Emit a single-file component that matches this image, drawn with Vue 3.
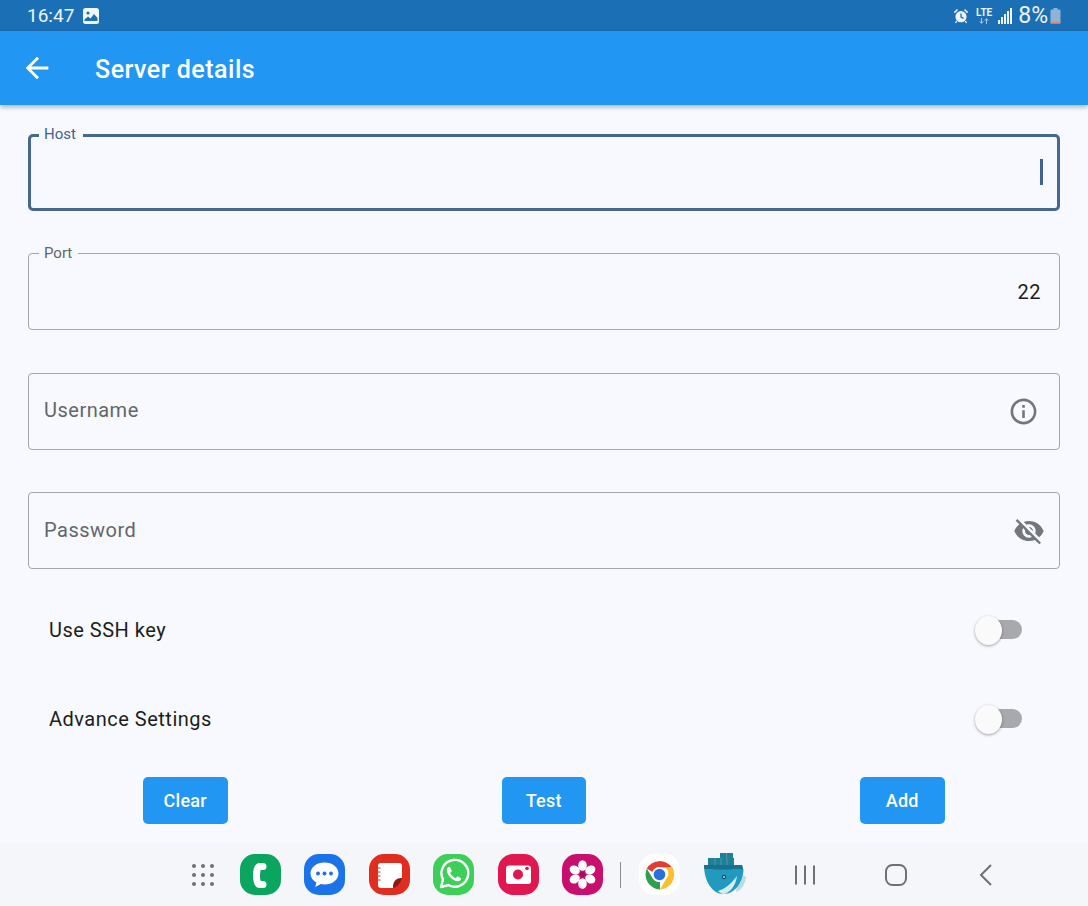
<template>
  <div class="screen">
    <!-- Status bar -->
    <div class="status-bar">
      <div class="status-left">
        <span class="clock">16:47</span>
        <svg class="gallery" viewBox="0 0 16 16" width="16" height="16">
          <rect x="0" y="0" width="16" height="16" rx="2.5" fill="#f1f6fb" />
          <circle cx="5" cy="5" r="1.6" fill="#1a6fb5" />
          <path d="M1.5 13 L1.5 11.5 L5 8.5 L7.5 10.5 L11 6 L14.5 10 L14.5 13 Z" fill="#1a6fb5" />
        </svg>
      </div>
      <div class="status-right">
        <svg class="alarm" viewBox="0 0 16 16" width="16" height="16">
          <circle cx="8" cy="8.7" r="5.6" fill="#eef4fa" />
          <path d="M8 5.5 V9 L10.6 10.4" stroke="#1a6fb5" stroke-width="1.3" fill="none" />
          <path d="M0.8 4 L4 1 L5 2 L1.9 5.2 Z M15.2 4 L12 1 L11 2 L14.1 5.2 Z" fill="#eef4fa" />
          <path d="M3.6 13 L2.6 15 M12.4 13 L13.4 15" stroke="#eef4fa" stroke-width="1.4" />
        </svg>
        <div class="lte">
          <span>LTE</span>
          <svg viewBox="0 0 12 6" width="12" height="6">
            <path d="M3.5 0 V5 M1.8 3.4 L3.5 5.4 L5.2 3.4 M8.5 6 V1 M6.8 2.6 L8.5 0.6 L10.2 2.6" stroke="#a9c8e4" stroke-width="1" fill="none" />
          </svg>
        </div>
        <div class="signal">
          <i v-for="h in signalBars" :key="h" :style="{ height: h + 'px' }"></i>
        </div>
        <span class="battery-text">8%</span>
        <svg class="battery" viewBox="0 0 11 16" width="11" height="16">
          <rect x="3.5" y="0" width="4" height="2" fill="#8fb3d3" />
          <rect x="0.5" y="1.5" width="10" height="14" rx="1.2" fill="#8fb3d3" />
          <rect x="0.5" y="13.8" width="10" height="1.7" fill="#d98a7c" />
        </svg>
      </div>
    </div>

    <!-- App bar -->
    <header class="app-bar">
      <svg class="back" viewBox="0 0 24 24" width="34" height="34">
        <path d="M20 11H7.83l5.59-5.59L12 4l-8 8 8 8 1.41-1.41L7.83 13H20v-2z" fill="#fff" />
      </svg>
      <h1>Server details</h1>
    </header>

    <main class="form">
      <div class="field focused">
        <label class="float-label">Host</label>
        <span class="caret"></span>
      </div>
      <div class="field">
        <label class="float-label">Port</label>
        <span class="value">22</span>
      </div>
      <div class="field">
        <span class="placeholder">Username</span>
        <svg class="info" viewBox="0 0 24 24" width="31" height="31">
          <path fill="#73767b" d="M11 7h2v2h-2zm0 4h2v6h-2zm1-9C6.48 2 2 6.48 2 12s4.48 10 10 10 10-4.48 10-10S17.52 2 12 2zm0 18c-4.41 0-8-3.59-8-8s3.59-8 8-8 8 3.59 8 8-3.59 8-8 8z" />
        </svg>
      </div>
      <div class="field">
        <span class="placeholder">Password</span>
        <svg class="eye" viewBox="0 0 24 24" width="32" height="32">
          <path fill="#73767b" d="M12 7c2.76 0 5 2.24 5 5 0 .65-.13 1.26-.36 1.83l2.92 2.92c1.51-1.26 2.7-2.89 3.43-4.75-1.73-4.39-6-7.5-11-7.5-1.4 0-2.74.25-3.98.7l2.16 2.16C10.74 7.13 11.35 7 12 7zM2 4.27l2.28 2.28.46.46C3.08 8.3 1.78 10.02 1 12c1.73 4.39 6 7.5 11 7.5 1.55 0 3.03-.3 4.38-.84l.42.42L19.73 22 21 20.73 3.27 3 2 4.27zM7.53 9.8l1.55 1.55c-.05.21-.08.43-.08.65 0 1.66 1.34 3 3 3 .22 0 .44-.03.65-.08l1.55 1.55c-.67.33-1.41.53-2.2.53-2.76 0-5-2.24-5-5 0-.79.2-1.53.53-2.2zm4.31-.78l3.15 3.15.02-.16c0-1.66-1.34-3-3-3l-.17.01z" />
        </svg>
      </div>

      <div class="switch-row first">
        <span>Use SSH key</span>
        <div class="switch"><span class="thumb"></span></div>
      </div>
      <div class="switch-row second">
        <span>Advance Settings</span>
        <div class="switch"><span class="thumb"></span></div>
      </div>

      <div class="actions">
        <button v-for="a in actions" :key="a">{{ a }}</button>
      </div>
    </main>

    <!-- Launcher dock -->
    <footer class="dock">
      <div class="apps-grid">
        <i v-for="n in 9" :key="n"></i>
      </div>

      <svg class="app first-app" viewBox="0 0 41 41">
        <rect width="41" height="41" rx="15" fill="#0aa55f" />
        <path d="M23 12.500h-3c-2.500 0-3.500 4-3.500 9s1 9 3.500 9h3" fill="none" stroke="#fff" stroke-width="7" stroke-linecap="round" stroke-linejoin="round" />
      </svg>

      <svg class="app" viewBox="0 0 41 41">
        <rect width="41" height="41" rx="15" fill="#1a73e8" />
        <path d="M20.500 8.500c-8 0-14 4.800-14 11 0 3.800 2.300 7 5.800 9l-1 4.500 5.500-3c1.200.3 2.400.5 3.700.5 8 0 14-4.800 14-11s-6-11-14-11z" fill="#fff" />
        <circle cx="14" cy="19.500" r="2" fill="#1a73e8" />
        <circle cx="20.500" cy="19.500" r="2" fill="#1a73e8" />
        <circle cx="27" cy="19.500" r="2" fill="#1a73e8" />
      </svg>

      <svg class="app" viewBox="0 0 41 41">
        <rect width="41" height="41" rx="15" fill="#df2d1f" />
        <path d="M12 9h18a3 3 0 0 1 3 3v12l-9 10H12a3 3 0 0 1-3-3V12a3 3 0 0 1 3-3z" fill="#fff" />
        <path d="M33 24c-5-.8-9.500 3-9 10 4-1 8-5 9-10z" fill="#8c1a12" />
        <path d="M8.500 14h3M8.500 18h3M8.500 22h3M8.500 26h3" stroke="#df2d1f" stroke-width="1" />
      </svg>

      <svg class="app" viewBox="0 0 41 41">
        <rect width="41" height="41" rx="15" fill="#3ecf58" />
        <path d="M8 33l2-7.500A13.400 13.400 0 1 1 15.400 31z" fill="none" stroke="#fff" stroke-width="2.400" stroke-linejoin="round" />
        <path d="M16.200 12.800c-.9 0-2.400 1.200-2.400 3.500 0 5 6.400 11 11 11 2.300 0 3.400-1.600 3.400-2.700 0-.5-3.200-2.200-3.700-2.200-.6 0-1.200 1.600-1.800 1.600-1.600 0-5.300-3.500-5.300-5.200 0-.6 1.400-1.200 1.400-1.800 0-.5-1.500-4.200-2.600-4.200z" fill="#fff" />
      </svg>

      <svg class="app" viewBox="0 0 41 41">
        <rect width="41" height="41" rx="15" fill="#e0184f" />
        <rect x="8" y="11.500" width="25" height="18.500" rx="3" fill="#fff" />
        <circle cx="20" cy="20.500" r="5" fill="#e0184f" />
        <circle cx="29" cy="14.500" r="1.800" fill="#e0184f" />
      </svg>

      <svg class="app" viewBox="0 0 41 41">
        <rect width="41" height="41" rx="15" fill="#c80f6d" />
        <g fill="#fff">
          <ellipse v-for="r in petals" :key="r" cx="20.500" cy="11.500" rx="4.300" ry="5.300" :transform="`rotate(${r} 20.500 20.500)`" />
        </g>
        <circle cx="20.500" cy="20.500" r="2.400" fill="#a10d59" />
      </svg>

      <span class="dock-divider"></span>

      <svg class="chrome" viewBox="0 0 41 41">
        <rect width="41" height="41" rx="15" fill="#fff" />
        <path d="M7.800 14A15 15 0 0 1 33 13H20.500a7.500 7.500 0 0 0-7 4.500z" fill="#e23d31" transform="translate(0 .5)" />
        <path d="M33.500 13.500A15 15 0 0 1 21 35.500l6-10.500a7.500 7.500 0 0 0-.500-11.500z" fill="#fbc02d" />
        <path d="M21 35.500A15 15 0 0 1 7.800 14.500l6.200 10.500a7.500 7.500 0 0 0 7 3z" fill="#2f9e4f" />
        <circle cx="20.500" cy="20.500" r="7.500" fill="#fff" />
        <circle cx="20.500" cy="20.500" r="5.800" fill="#2a6fe0" />
      </svg>

      <svg class="docker" viewBox="0 0 42 43">
        <path d="M16 0h13v5h-13z" fill="#1f7f96" />
        <path d="M4 5h26v8H4z" fill="#1f7f96" />
        <path d="M11 5v8M17 5v8M23 5v8M22.500 0v5" stroke="#5aa9ba" stroke-width=".7" />
        <path d="M32 39c6-2 9-8 10-15l-7-4z" fill="#b8dde0" />
        <path d="M0 12h38l1.500 5c-1 13-9 24-20 24C8 41 0 28 0 12z" fill="#229ac0" />
        <path d="M0 12h38l1 4.500c-6-1.800-12 .5-19 0-7 .6-13-1-19.700-.5z" fill="#17718f" />
        <path d="M14 38c7-2 13-7 19-15-1 9-7 17-13 18-2 0-4-1-6-3z" fill="#d5edf0" />
        <circle cx="20" cy="24" r="2.200" fill="#0e4f68" />
        <circle cx="20" cy="24" r="1" fill="#bfe3ec" />
      </svg>

      <div class="nav">
        <svg viewBox="0 0 22 20" width="22" height="20">
          <path d="M2 .5v19M11 .5v19M20 .5v19" stroke="#6d7075" stroke-width="2" fill="none" />
        </svg>
        <svg viewBox="0 0 22 22" width="22" height="22">
          <rect x="1" y="1" width="20" height="20" rx="6.500" stroke="#6d7075" stroke-width="2" fill="none" />
        </svg>
        <svg viewBox="0 0 13 22" width="13" height="22">
          <path d="M12 1L2 11l10 10" stroke="#6d7075" stroke-width="2" fill="none" />
        </svg>
      </div>
    </footer>
  </div>
</template>

<script setup>
const signalBars = [4, 7, 10, 13, 16]
const petals = [0, 60, 120, 180, 240, 300]
const actions = ['Clear', 'Test', 'Add']
</script>

<style>
html,
body {
  margin: 0;
  background: #f7f9fe;
}
</style>

<style scoped>
.screen {
  width: 1088px;
  height: 906px;
  overflow: hidden;
  display: flex;
  flex-direction: column;
  background: #f7f9fe;
  font-family: 'Roboto', sans-serif;
  color: #1c1d20;
}

/* Status bar */
.status-bar {
  height: 31px;
  flex: none;
  display: flex;
  align-items: center;
  justify-content: space-between;
  padding: 0 27px;
  background: #1b6fb5;
  color: #edf4fa;
}
.status-left {
  display: flex;
  align-items: center;
  gap: 9px;
}
.clock {
  font-size: 19px;
}
.status-right {
  display: flex;
  align-items: center;
}
.alarm {
  margin-right: 7px;
}
.lte {
  display: flex;
  flex-direction: column;
  align-items: center;
  margin-right: 6px;
}
.lte span {
  font-size: 10px;
  font-weight: 700;
  line-height: 10px;
}
.signal {
  display: flex;
  align-items: flex-end;
  gap: 1px;
  margin-right: 6px;
  height: 16px;
}
.signal i {
  display: block;
  width: 2px;
  background: #edf4fa;
}
.battery-text {
  font-size: 23px;
  line-height: 26px;
}
.battery {
  margin-left: 2px;
}

/* App bar */
.app-bar {
  height: 74px;
  flex: none;
  display: flex;
  align-items: center;
  padding-left: 20px;
  background: #2196f3;
  box-shadow: 0 2px 5px rgba(0, 0, 0, 0.3);
  position: relative;
  z-index: 1;
}
.app-bar h1 {
  margin: 2px 0 0 41px;
  font-size: 25px;
  font-weight: 500;
  letter-spacing: 0.5px;
  color: #fff;
}

/* Form */
.form {
  flex: 1;
  display: flex;
  flex-direction: column;
  padding: 28.5px 28px 0;
}
.field {
  position: relative;
  box-sizing: border-box;
  height: 77px;
  margin-bottom: 42.5px;
  flex: none;
  display: flex;
  align-items: center;
  justify-content: space-between;
  padding: 0 17px 0 15px;
  border: 1px solid #a3a6ab;
  border-radius: 4px;
}
.field.focused {
  border: 3px solid #46678f;
  border-radius: 5px;
  padding: 0 14px 0 13px;
  justify-content: flex-end;
}
.float-label {
  position: absolute;
  left: 10px;
  top: -10px;
  padding: 0 6px 0 5px;
  background: #f7f9fe;
  font-size: 15px;
  line-height: 18px;
  color: #63666b;
}
.focused .float-label {
  left: 8px;
  top: -12px;
  padding-right: 7px;
  color: #3f6290;
}
.caret {
  width: 3px;
  height: 26px;
  background: #3f6290;
}
.value {
  margin-left: auto;
  font-size: 20px;
  letter-spacing: 0.5px;
  margin-right: 1px;
}
.placeholder {
  font-size: 20px;
  letter-spacing: 0.5px;
  padding-bottom: 2px;
  color: #63666b;
}
.info {
  margin-right: 3px;
}
.eye {
  margin-right: -3px;
}

/* Switch rows */
.switch-row {
  display: flex;
  align-items: center;
  justify-content: space-between;
  height: 30px;
  flex: none;
  padding: 0 38px 0 21px;
  font-size: 20px;
  letter-spacing: 0.5px;
}
.switch-row span:first-child {
  padding-top: 2px;
}
.switch-row.first {
  margin-top: 2.5px;
}
.switch-row.second {
  margin-top: 59px;
}
.switch {
  position: relative;
  width: 46px;
  height: 19px;
  border-radius: 10px;
  background: #a8a9ad;
}
.thumb {
  position: absolute;
  left: -1px;
  top: -4px;
  width: 27px;
  height: 27px;
  border-radius: 50%;
  background: #fafafa;
  box-shadow: 0 1px 3px rgba(0, 0, 0, 0.35);
}

/* Actions */
.actions {
  display: flex;
  justify-content: space-between;
  margin-top: 44px;
  padding: 0 115.5px 0 115px;
}
.actions button {
  width: 84.5px;
  height: 47px;
  border: none;
  border-radius: 5px;
  background: #2196f3;
  color: #fff;
  font-family: inherit;
  font-size: 18px;
  font-weight: 500;
  letter-spacing: 0.3px;
}

/* Dock */
.dock {
  height: 63px;
  flex: none;
  display: flex;
  align-items: center;
  padding-left: 192px;
  background: #f5f6f9;
}
.apps-grid {
  display: grid;
  grid-template-columns: repeat(3, 4px);
  gap: 5px;
  margin-right: 2px;
}
.apps-grid i {
  width: 4px;
  height: 4px;
  border-radius: 50%;
  background: #6d7075;
}
.app {
  width: 41px;
  height: 41px;
  margin-left: 23.5px;
  flex: none;
}
.dock-divider {
  width: 1px;
  height: 26px;
  margin-left: 17px;
  background: #8a8c90;
}
.chrome {
  width: 41px;
  height: 41px;
  margin-left: 18px;
  flex: none;
}
.docker {
  width: 42px;
  height: 43px;
  margin-left: 23.5px;
  flex: none;
}
.nav {
  display: flex;
  align-items: center;
  margin-left: 48px;
}
.nav svg:nth-child(2) {
  margin-left: 69px;
}
.nav svg:nth-child(3) {
  margin-left: 72px;
}
</style>
